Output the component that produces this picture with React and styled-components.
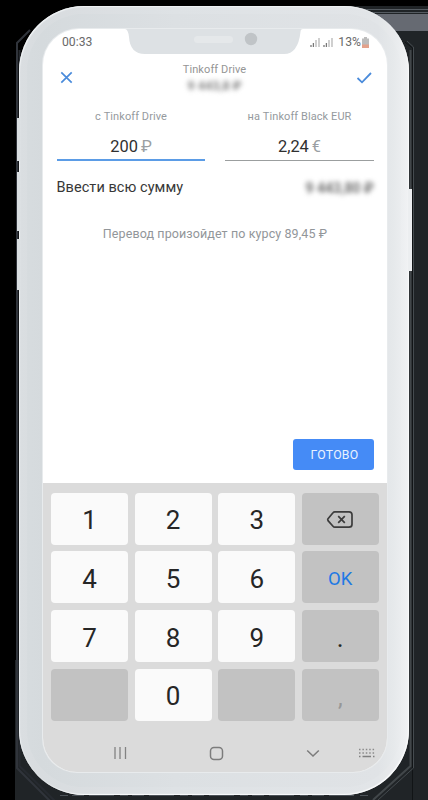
import React from 'react';
import styled, { createGlobalStyle } from 'styled-components';

const GlobalStyle = createGlobalStyle`
  * { box-sizing: border-box; }
  body { margin: 0; background: #000; font-family: Roboto, "Noto Sans", sans-serif; }
  button { font-family: inherit; border: 0; padding: 0; margin: 0; }
`;

const Stage = styled.main`
  position: relative;
  width: 428px;
  height: 800px;
  padding: 6px 0 0 19px;
  overflow: hidden;
  background: #000;
`;

const Backdrop = styled.svg`
  position: absolute;
  inset: 0;
`;

const Phone = styled.div`
  position: relative;
  width: 390px;
  height: 789px;
  padding: 23px 22px 23px 24px;
  border-radius: 65px;
  background: linear-gradient(90deg, #d7dcdf 0, #d5dadd 6%, #dce0e3 40%, #e0e3e6 92%, #e6e9eb 96%, #f0f1f3 100%);
  box-shadow: inset 1px 1px 1px #eff2f4, inset 0 0 0 8px rgba(255, 255, 255, 0.08),
    inset -1px -1px 1px #fafbfc;
`;

const SideButton = styled.i`
  position: absolute;
  top: ${p => p.$top}px;
  ${p => (p.$right ? 'right: -3px;' : 'left: -2px;')}
  width: ${p => (p.$right ? 4 : 3)}px;
  height: ${p => p.$height}px;
  background: ${p => (p.$right ? '#eceef0' : '#d9dee1')};
`;

const Screen = styled.div`
  position: relative;
  display: flex;
  flex-direction: column;
  width: 344px;
  height: 743px;
  border-radius: 36px 36px 34px 34px;
  overflow: hidden;
  background: #fff;
  box-shadow: 0 0 0 1px #e8ebed;
`;

const Notch = styled.svg`
  position: absolute;
  left: 82px;
  top: 0;
`;

const StatusBar = styled.div`
  display: flex;
  align-items: center;
  justify-content: space-between;
  height: 26px;
  padding: 0 18px 0 19px;
  font-size: 12.2px;
  color: #6a6a6a;
`;

const StatusIcons = styled.div`
  display: flex;
  align-items: center;
  svg { display: block; }
`;

const Percent = styled.span`
  margin: 0 1px 0 2px;
`;

const Header = styled.header`
  display: flex;
  justify-content: space-between;
  height: 49px;
  padding: 0 15px 0 17px;
  svg { margin-top: 16px; }
`;

const Heading = styled.div`
  display: flex;
  flex-direction: column;
  align-items: center;
  padding-top: 8px;
  font-size: 11px;
  line-height: 14px;
  letter-spacing: 0.1px;
  color: #959595;
`;

const Hidden = styled.span`
  filter: blur(${p => p.$blur}px);
  font-size: ${p => p.$size}px;
  font-weight: 700;
  letter-spacing: 0;
  color: ${p => p.$color};
  line-height: 18px;
`;

const Fields = styled.div`
  display: grid;
  grid-template-columns: 148px 149px;
  column-gap: 20px;
  padding-left: 14px;
`;

const Field = styled.label`
  display: flex;
  flex-direction: column;
  align-items: center;
  height: 57px;
  border-bottom: ${p => (p.$active ? '2px solid #5b9ce6' : '1px solid #9b9e9f')};
  margin-bottom: ${p => (p.$active ? 0 : 1)}px;
`;

const FieldLabel = styled.span`
  margin-top: 6px;
  font-size: 11px;
  line-height: 14px;
  letter-spacing: ${p => p.$spacing}px;
  color: #959a9e;
`;

const Amount = styled.span`
  margin-top: 13px;
  font-size: 16.4px;
  line-height: 20px;
  color: #303030;
`;

const Currency = styled.span`
  margin-left: 3px;
  color: #9b9fa3;
`;

const FullSum = styled.div`
  display: flex;
  align-items: center;
  justify-content: space-between;
  height: 51px;
  padding: 0 13px 0 13.5px;
  font-size: 14.5px;
  letter-spacing: 0.06px;
  color: #373737;
`;

const Rate = styled.p`
  margin: 13px 0 0;
  text-align: center;
  font-size: 12.5px;
  line-height: 16px;
  letter-spacing: 0.1px;
  color: #92969a;
`;

const Done = styled.button`
  align-self: flex-end;
  width: 81px;
  height: 31px;
  margin: auto 13px 13px 0;
  padding: 1px 0 0 2px;
  border-radius: 3px;
  background: #458bf6;
  color: #e9f2ff;
  font-size: 12.3px;
  letter-spacing: 0.25px;
`;

const Keyboard = styled.section`
  height: 289px;
  padding: 9.5px 8px 0;
  background: #dbdbdb;
`;

const Keys = styled.div`
  display: grid;
  grid-template-columns: repeat(4, 77px);
  grid-auto-rows: 52.3px;
  column-gap: 6.6px;
  row-gap: 6.4px;
`;

const Key = styled.button`
  display: flex;
  align-items: center;
  justify-content: center;
  padding-top: ${p => p.$drop || 3}px;
  border-radius: 4px;
  background: ${p => (p.$dark ? '#c2c2c2' : '#fafafa')};
  color: ${p => p.$color || '#262626'};
  font-size: ${p => p.$size || 26}px;
`;

const NavBar = styled.nav`
  display: flex;
  align-items: center;
  height: 65px;
  padding-left: 62px;
`;

const NavItem = styled.span`
  display: flex;
  margin-right: ${p => p.$gap || 0}px;
`;

const digits = [
  ['1', '2', '3', 'back'],
  ['4', '5', '6', 'OK'],
  ['7', '8', '9', '.'],
  ['', '0', '', ','],
];

const BackspaceIcon = () => (
  <svg width="28" height="20" viewBox="0 0 28 20" fill="none" stroke="#3c3c3c" strokeWidth="1.7" strokeLinejoin="round">
    <path d="M8.8 1.8H23Q26 1.8 26 4.8V14.2Q26 17.2 23 17.2H8.8Q7.7 17.2 7 16.3L2 10.6Q1.4 9.7 2 8.8L7 2.7Q7.7 1.8 8.8 1.8Z" />
    <path d="M12.2 6.2L18.8 12.8M18.8 6.2L12.2 12.8" />
  </svg>
);

const Signal = () => (
  <svg width="13" height="11" viewBox="0 0 13 11">
    <path d="M1 8v2M3.4 6v4" stroke="#777" strokeWidth="1.3" />
    <path d="M6 3v7M9 1v9" stroke="#b0b0b0" strokeWidth="1.2" />
  </svg>
);

function KeyCell({ value }) {
  if (value === 'back') return <Key $dark aria-label="backspace"><BackspaceIcon /></Key>;
  if (value === 'OK') return <Key $dark $size={18.5} $color="#2179e4">OK</Key>;
  if (value === ',') return <Key $dark $drop={7} $color="#979797" $size={24}>,</Key>;
  if (value === '.' || value === '') return <Key $dark>{value}</Key>;
  return <Key>{value}</Key>;
}

export default function App() {
  return (
    <Stage>
      <GlobalStyle />
      <Backdrop width="428" height="800" viewBox="0 0 428 800" aria-hidden="true">
        <path d="M330 6H428V800H15V660H300Z" fill="#202427" />
        <path d="M350 14H428V31H380Z" fill="#666a72" />
        <path d="M340 9.5H428M350 12.5H428" stroke="#555b61" />
        <path d="M405 42L412.500 48V800" fill="none" stroke="#111416" />
        <path d="M407 41L413.500 47V768L378 800" fill="none" stroke="#454b4f" />
        <path d="M410.500 50V766L373 800" fill="none" stroke="#42474a" strokeWidth="2" />
        <path d="M30 30L17 43V768L55 806" fill="none" stroke="#30343b" strokeWidth="2" />
        <path d="M19.500 50V766L60 806" fill="none" stroke="#262a30" strokeWidth="2" />
        <path d="M60 795.500H370" stroke="#4c5258" strokeDasharray="8 4 12 5 25 6" />
      </Backdrop>
      <Phone>
        <SideButton $top={112} $height={43} />
        <SideButton $top={166} $height={59} />
        <SideButton $top={233} $height={51} />
        <SideButton $right $top={183} $height={82} />
        <Screen>
          <Notch width="178" height="26" viewBox="0 0 178 26" aria-hidden="true">
            <path d="M0 0H178Q175.500 0 175.500 3Q173 25 159 25H20Q5 25 4 8Q3 0 0 0Z" fill="#dde1e4" />
            <rect x="69" y="7" width="39" height="7" rx="3.500" fill="#e5e8ea" />
            <circle cx="126" cy="10" r="6.200" fill="#c0c4c7" />
          </Notch>
          <StatusBar>
            <span>00:33</span>
            <StatusIcons>
              <Signal /><Signal />
              <Percent>13%</Percent>
              <svg width="7" height="11" viewBox="0 0 7 11">
                <path d="M0 1.500H2V0H5V1.500H7V11H0Z" fill="#bcbcbc" />
                <path d="M0 7.500H7V11H0Z" fill="#e3a28c" />
              </svg>
            </StatusIcons>
          </StatusBar>
          <Header>
            <svg width="13" height="13" viewBox="0 0 13 13"><path d="M1.300 1.300L11.700 11.700M11.700 1.300L1.300 11.700" stroke="#4a8bdb" strokeWidth="1.700" /></svg>
            <Heading>
              <span>Tinkoff Drive</span>
              <Hidden $blur={2.4} $size={12.5} $color="#808080">9 443,8 ₽</Hidden>
            </Heading>
            <svg width="16" height="13" viewBox="0 0 16 13"><path d="M1.500 7L6 11.300L15 2" fill="none" stroke="#4a8bdb" strokeWidth="1.800" /></svg>
          </Header>
          <Fields>
            <Field $active>
              <FieldLabel $spacing={0.08}>с Tinkoff Drive</FieldLabel>
              <Amount>200<Currency>₽</Currency></Amount>
            </Field>
            <Field>
              <FieldLabel $spacing={0.08}>на Tinkoff Black EUR</FieldLabel>
              <Amount>2,24<Currency>€</Currency></Amount>
            </Field>
          </Fields>
          <FullSum>
            <span>Ввести всю сумму</span>
            <Hidden $blur={2.5} $size={14} $color="#6c6c6c">9 443,80 ₽</Hidden>
          </FullSum>
          <Rate>Перевод произойдет по курсу 89,45 ₽</Rate>
          <Done>ГОТОВО</Done>
          <Keyboard>
            <Keys>
              {digits.flat().map((value, i) => <KeyCell key={i} value={value} />)}
            </Keys>
            <NavBar>
              <NavItem $gap={82}>
                <svg width="14" height="14" viewBox="0 0 14 14"><path d="M2 1V13M7 1V13M12.500 1V13" stroke="#838383" strokeWidth="1.300" /></svg>
              </NavItem>
              <NavItem $gap={82}>
                <svg width="15" height="15" viewBox="0 0 15 15"><rect x="1.500" y="1.500" width="12" height="12" rx="3.500" fill="none" stroke="#7c7c7c" strokeWidth="1.500" /></svg>
              </NavItem>
              <NavItem $gap={39}>
                <svg width="14" height="9" viewBox="0 0 14 9"><path d="M1.200 1.500L7 7L12.800 1.500" fill="none" stroke="#7c7c7c" strokeWidth="1.500" /></svg>
              </NavItem>
              <NavItem>
                <svg width="16" height="10" viewBox="0 0 16 10">
                  <path d="M0 1.500H16M0 5H16" stroke="#8a8a8a" strokeWidth="1.500" strokeDasharray="1.500 1.900" />
                  <path d="M0 8.500H1.500M3.500 8.500H12M14 8.500H15.500" stroke="#808080" strokeWidth="1.500" />
                </svg>
              </NavItem>
            </NavBar>
          </Keyboard>
        </Screen>
      </Phone>
    </Stage>
  );
}
